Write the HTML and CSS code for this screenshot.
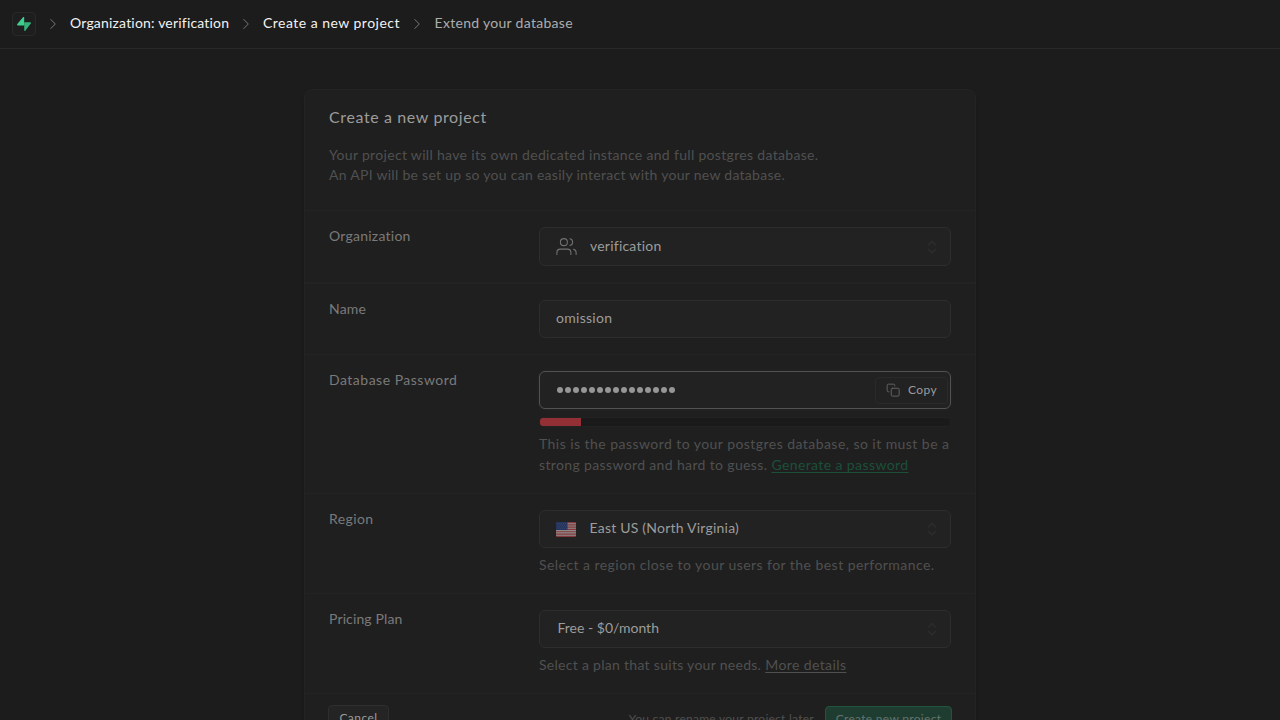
FILE: index.html
```html
<!DOCTYPE html>
<html lang="en">
<head>
<meta charset="utf-8">
<title>Create a new project</title>
<link rel="stylesheet" href="styles.css">
</head>
<body>
<svg class="defs" width="0" height="0">
  <symbol id="chevron" viewBox="0 0 16 16"><path d="M5.5 3.2 10.3 8l-4.8 4.8" fill="none" stroke="currentColor" stroke-width="1"/></symbol>
  <symbol id="selector" viewBox="0 0 20 20"><path d="M6.6 7.8 10 4.400l3.400 3.400M6.600 12.400l3.400 3.400 3.400-3.400" fill="none" stroke="currentColor" stroke-width="1.800" stroke-linecap="round" stroke-linejoin="round"/></symbol>
</svg>
<header class="topbar">
  <a class="logo"><svg width="14" height="14" viewBox="0 0 14 14"><path d="M7.200.5v8H1c-.9 0-1.200-.9-.7-1.500L6 .3C6.500-.3 7.200 0 7.200.5Z" fill="#3ecf8e"/><path d="M7.200 13.500V5.200h5.900c.9 0 1.200.8.700 1.400L8.300 13.700c-.4.5-1.100.3-1.100-.2Z" fill="#34b27b"/></svg></a>
  <svg class="sep" width="16" height="16"><use href="#chevron"/></svg>
  <span class="crumb crumb-org">Organization: verification</span>
  <svg class="sep" width="16" height="16"><use href="#chevron"/></svg>
  <span class="crumb crumb-new">Create a new project</span>
  <svg class="sep" width="16" height="16"><use href="#chevron"/></svg>
  <span class="crumb crumb-last">Extend your database</span>
</header>
<main class="panel">
  <section class="intro">
    <h1>Create a new project</h1>
    <p class="intro-a">Your project will have its own dedicated instance and full postgres database.</p>
    <p class="intro-b">An API will be set up so you can easily interact with your new database.</p>
  </section>
  <section class="row row-org">
    <label class="l-org">Organization</label>
    <div class="field">
      <div class="control tall">
        <svg class="users" width="21" height="21" viewBox="0 0 24 24" fill="none" stroke="currentColor" stroke-width="1.200" stroke-linecap="round" stroke-linejoin="round"><path d="M17 21v-2a4 4 0 0 0-4-4H5a4 4 0 0 0-4 4v2M23 21v-2a4 4 0 0 0-3-3.870M16 3.130a4 4 0 0 1 0 7.750"/><circle cx="9" cy="7" r="4"/></svg>
        <span class="value v-org">verification</span>
        <svg class="selector" width="20" height="20"><use href="#selector"/></svg>
      </div>
    </div>
  </section>
  <section class="row row-name">
    <label class="l-name">Name</label>
    <div class="field"><div class="control"><span class="value v-name">omission</span></div></div>
  </section>
  <section class="row row-pass">
    <label class="l-pass">Database Password</label>
    <div class="field">
      <div class="control focus">
        <span class="dots"><i></i><i></i><i></i><i></i><i></i><i></i><i></i><i></i><i></i><i></i><i></i><i></i><i></i><i></i><i></i></span>
        <button class="copy"><svg width="14" height="14" viewBox="0 0 24 24" fill="none" stroke="currentColor" stroke-width="1.600" stroke-linecap="round" stroke-linejoin="round"><rect x="9" y="9" width="13.500" height="13.500" rx="2"/><path d="M5 15H4a2 2 0 0 1-2-2V4a2 2 0 0 1 2-2h9a2 2 0 0 1 2 2v1"/></svg><span>Copy</span></button>
      </div>
      <div class="meter"><div class="meter-fill" style="width:10%"></div></div>
      <p class="hint pass-a">This is the password to your postgres database, so it must be a</p>
      <p class="hint pass-b"><span>strong password and hard to guess.</span> <a class="green">Generate a password</a></p>
    </div>
  </section>
  <section class="row row-region">
    <label class="l-region">Region</label>
    <div class="field">
      <div class="control">
        <svg class="flag" width="20" height="15" viewBox="0 0 20 15"><rect width="20" height="15" rx="1" fill="#85383d"/><path d="M0 1.700h20M0 4h20M0 6.300h20M0 8.600h20M0 10.900h20M0 13.200h20" stroke="#8f8a8a" stroke-width="1.100"/><rect width="11.500" height="8" fill="#25345c"/><path d="M1 1.500h10M2 3.200h9M1 4.900h10M2 6.600h9" stroke="#56607d" stroke-width=".6" stroke-dasharray=".7 1.300"/></svg>
        <span class="value v-region">East US (North Virginia)</span>
        <svg class="selector" width="20" height="20"><use href="#selector"/></svg>
      </div>
      <p class="hint region-hint">Select a region close to your users for the best performance.</p>
    </div>
  </section>
  <section class="row row-plan">
    <label class="l-plan">Pricing Plan</label>
    <div class="field">
      <div class="control">
        <span class="value v-plan">Free - $0/month</span>
        <svg class="selector" width="20" height="20"><use href="#selector"/></svg>
      </div>
      <p class="hint plan-hint"><span>Select a plan that suits your needs.</span> <a>More details</a></p>
    </div>
  </section>
  <footer class="actions">
    <button class="cancel">Cancel</button>
    <span class="note">You can rename your project later</span>
    <button class="create">Create new project</button>
  </footer>
</main>
</body>
</html>
```
FILE: styles.css
```css
* { box-sizing: border-box; }
html, body { height: 100%; }
body { margin: 0; overflow: hidden; background: #1c1c1c; color: #9c9c9c; font: 14px/20px Lato, "Liberation Sans", sans-serif; letter-spacing: .4px; }
.defs { position: absolute; }
p, h1 { margin: 0; white-space: nowrap; }
svg { flex: none; }
button { font: inherit; letter-spacing: inherit; }
.topbar { display: flex; align-items: center; height: 49px; padding: 0 12px 1px; border-bottom: 1px solid #282828; white-space: nowrap; }
.logo { display: flex; align-items: center; justify-content: center; width: 24px; height: 24px; border: 1px solid #282828; border-radius: 4px; background: #1e1e1e; }
.sep { margin: 0 9px; color: #777; }
.crumb { padding-bottom: 2px; color: #f2f2f2; }
.crumb-org { width: 159px; letter-spacing: .19px; }
.crumb-new { width: 137px; letter-spacing: .48px; }
.crumb-last { padding-left: .5px; color: #adadad; letter-spacing: .3px; }
.panel { width: 672px; margin: 40px auto 0; border: 1px solid #232323; border-radius: 8px; background: #1f1f1f; box-shadow: 0 2px 5px rgba(0,0,0,.1); }
.intro { height: 121px; padding: 16px 24px; border-bottom: 1px solid #232323; color: #505050; }
.intro h1 { margin-bottom: 17px; font-size: 16px; line-height: 22px; font-weight: 400; letter-spacing: .62px; color: #9c9c9c; }
.intro-a { letter-spacing: .32px; }
.intro-b { letter-spacing: .28px; }
.row { display: grid; grid-template-columns: 210px 412px; padding: 16px 24px; border-bottom: 1px solid #232323; }
.row-org { border-bottom-width: 2px; }
.row-pass { height: 139px; }
.row-region, .row-plan { height: 100px; }
label { margin-top: -1px; color: #7a7a7a; white-space: nowrap; }
.l-org { letter-spacing: .24px; }
.l-name { letter-spacing: .2px; }
.l-pass { letter-spacing: .5px; }
.l-plan { letter-spacing: .13px; }
.control { display: flex; align-items: center; height: 38px; padding: 0 8px 0 16px; border: 1px solid #2d2d2d; border-radius: 6px; background: #222; }
.control.tall { height: 39px; }
.control.focus { border-color: #525252; padding-right: 2px; box-shadow: 0 0 0 2px #212121; }
.value { white-space: nowrap; line-height: 20px; padding-bottom: 2px; }
.tall .value { padding-bottom: 1px; }
.users { color: #717171; }
.users + .value { margin-left: 13px; }
.flag { margin-top: 1px; }
.flag + .value { margin-left: 13px; }
.v-org { letter-spacing: .22px; }
.v-name { letter-spacing: .28px; }
.v-region { padding-left: .5px; letter-spacing: .22px; }
.v-plan { padding-left: 1.5px; letter-spacing: 0; }
.selector { margin-left: auto; color: #2b2b2b; }
.dots { display: flex; gap: 1.5px; padding-left: .5px; }
.dots i { width: 6.5px; height: 6.5px; border-radius: 50%; background: #969696; }
.copy { display: flex; align-items: center; gap: 8px; width: 73px; height: 27px; margin-left: auto; padding: 0 10px; border: 1px solid #2a2a2a; border-radius: 4px; background: #222; color: #666; font-size: 12px; letter-spacing: .4px; }
.copy span { color: #9c9c9c; }
.meter { height: 10px; margin-top: 8px; border: 1px solid #222; border-radius: 4px; background: #1a1a1a; overflow: hidden; }
.meter-fill { height: 8px; background: #933036; }
.hint { color: #505050; line-height: 21px; }
.pass-a { margin-top: 6px; letter-spacing: .45px; }
.pass-b span { letter-spacing: .36px; }
.region-hint, .plan-hint { margin-top: 6px; }
.region-hint { letter-spacing: .45px; }
.plan-hint span { letter-spacing: .29px; }
.hint a { text-decoration: underline; text-underline-offset: 2px; }
.green { color: #1c4f3a; }
.actions { display: flex; align-items: flex-start; height: 50px; padding: 11px 23px; font-size: 12px; letter-spacing: .26px; white-space: nowrap; }
.cancel, .create { height: 26px; padding: 0; border: 1px solid #2e2e2e; border-radius: 4px; background: #242424; color: #9c9c9c; }
.cancel { width: 61px; letter-spacing: .45px; }
.note { margin-left: auto; padding-top: 4px; margin-right: 11px; color: #505050; }
.create { width: 127px; margin-top: 1px; border-color: #21553f; background: #1f3c31; color: #64736c; letter-spacing: .3px; }
```
